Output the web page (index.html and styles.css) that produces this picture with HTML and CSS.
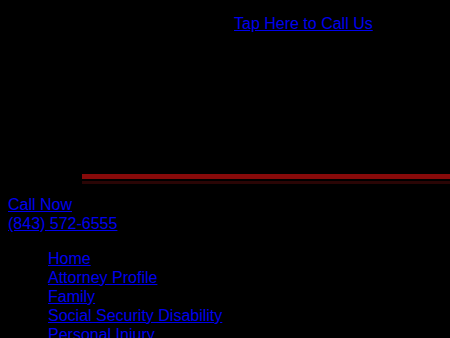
FILE: index.html
```html
<!DOCTYPE html>
<html>
<head>
<meta charset="utf-8">
<link rel="stylesheet" href="styles.css">
</head>
<body>
<div class="top">
  <a href="#">Tap Here to Call Us</a>
</div>
<div class="banner"></div>
<div class="rule"></div>
<div class="call">
  <a href="#">Call Now</a><br>
  <a href="#">(843) 572-6555</a>
</div>
<ul class="nav">
  <li><a href="#">Home</a></li>
  <li><a href="#">Attorney Profile</a></li>
  <li><a href="#">Family</a></li>
  <li><a href="#">Social Security Disability</a></li>
  <li><a href="#">Personal Injury</a></li>
</ul>
</body>
</html>
```

FILE: styles.css
```css
html, body {
  background: #000;
}
body {
  margin: 0;
  font-family: "Liberation Sans", Arial, sans-serif;
  font-size: 16px;
  line-height: 19px;
  color: #fff;
}
a {
  color: #0000ee;
}
.top {
  padding: 14px 0 0 234px;
}
.banner {
  height: 141px;
}
.rule {
  margin-left: 82px;
  height: 5px;
  background: #880a0a;
  border-bottom: 2px solid #000;
  box-shadow: 0 3px 0 #2a0505;
}
.call {
  padding: 14px 8px 0;
}
.nav {
  list-style: none;
  margin: 16px 0 0;
  padding-left: 48px;
}
```
